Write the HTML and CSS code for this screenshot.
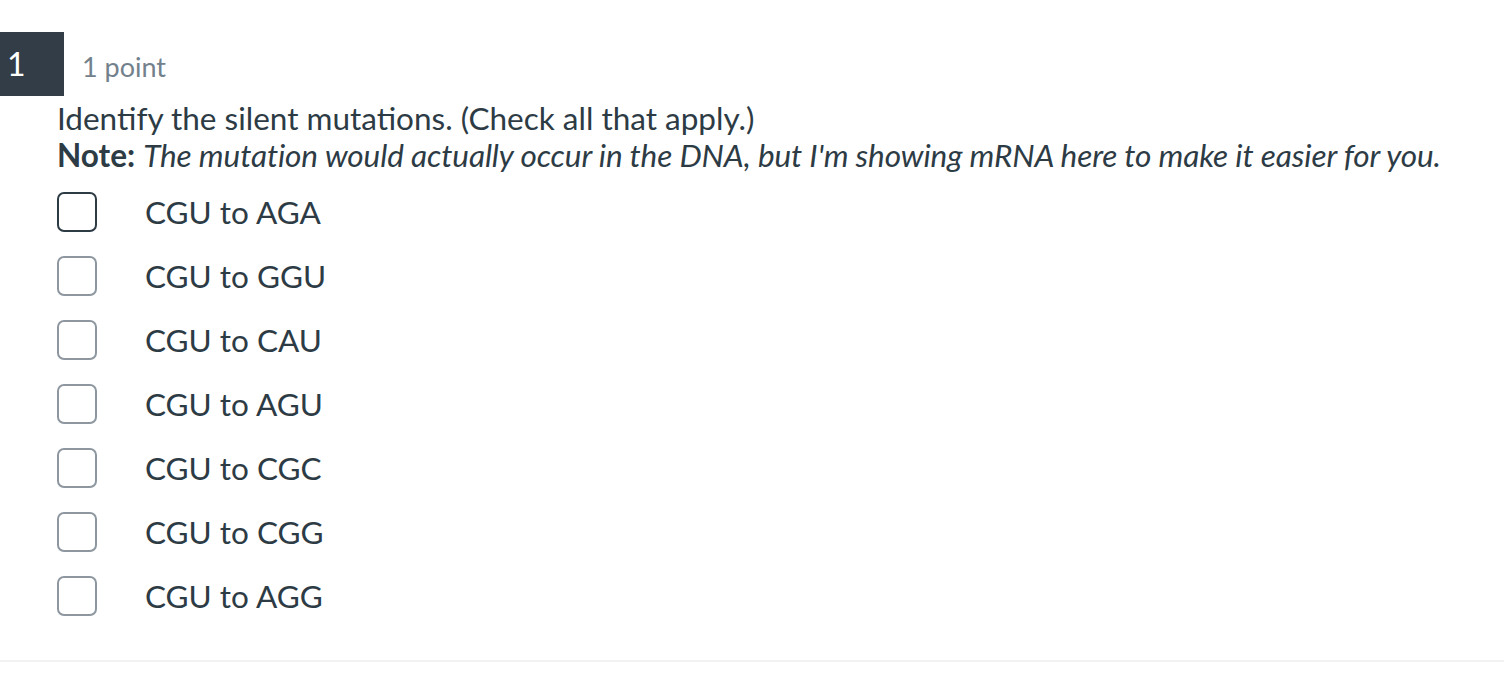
FILE: index.html
```html
<!DOCTYPE html>
<html>
<head>
<meta charset="utf-8">
<link rel="stylesheet" href="styles.css">
</head>
<body>
<div class="quiz">
  <div class="q-header">
    <div class="q-num">1</div>
    <div class="q-points">1 point</div>
  </div>
  <div class="q-body">
    <div class="q-text">
      <p>Identify the silent mutations. (Check all that apply.)</p>
      <p><strong>Note:</strong> <em class="note">The mutation would actually occur in the DNA, but I'm showing mRNA here to make it easier for you.</em></p>
    </div>
    <ul class="options">
      <li class="option"><span class="box focused"></span><span class="label">CGU to AGA</span></li>
      <li class="option"><span class="box"></span><span class="label">CGU to GGU</span></li>
      <li class="option"><span class="box"></span><span class="label">CGU to CAU</span></li>
      <li class="option"><span class="box"></span><span class="label">CGU to AGU</span></li>
      <li class="option"><span class="box"></span><span class="label">CGU to CGC</span></li>
      <li class="option"><span class="box"></span><span class="label">CGU to CGG</span></li>
      <li class="option"><span class="box"></span><span class="label">CGU to AGG</span></li>
    </ul>
  </div>
  <div class="q-rule"></div>
</div>
</body>
</html>
```
FILE: styles.css
```css
html, body {
  margin: 0;
  padding: 0;
  background: #ffffff;
}
body {
  font-family: Lato, "Open Sans", sans-serif;
  color: #2d3b45;
}
.quiz {
  padding-top: 32px;
}
.q-header {
  display: flex;
  align-items: center;
  height: 64px;
}
.q-num {
  width: 64px;
  height: 64px;
  background: #333d47;
  color: #ffffff;
  font-size: 32px;
  line-height: 64px;
  padding-left: 7px;
  box-sizing: border-box;
}
.q-points {
  margin-left: 18px;
  margin-top: 4px;
  font-size: 27px;
  color: #73818c;
}
.q-body {
  padding-left: 57px;
}
.q-text {
  font-size: 31.5px;
  line-height: 37px;
  margin-top: 4px;
}
.q-text p {
  margin: 0;
}
.q-text strong {
  font-weight: 700;
}
.q-text .note {
  letter-spacing: -0.1px;
}
.options {
  list-style: none;
  margin: 6px 0 0;
  padding: 0;
}
.option {
  display: flex;
  align-items: center;
  height: 64px;
}
.box {
  width: 40px;
  height: 40px;
  box-sizing: border-box;
  border: 2px solid #8e979f;
  border-radius: 7px;
  flex: none;
}
.box.focused {
  border-color: #2d3b45;
}
.label {
  margin-left: 48px;
  font-size: 31.5px;
}
.q-rule {
  margin-top: 32px;
  height: 2px;
  background: #f2f2f2;
}
```
